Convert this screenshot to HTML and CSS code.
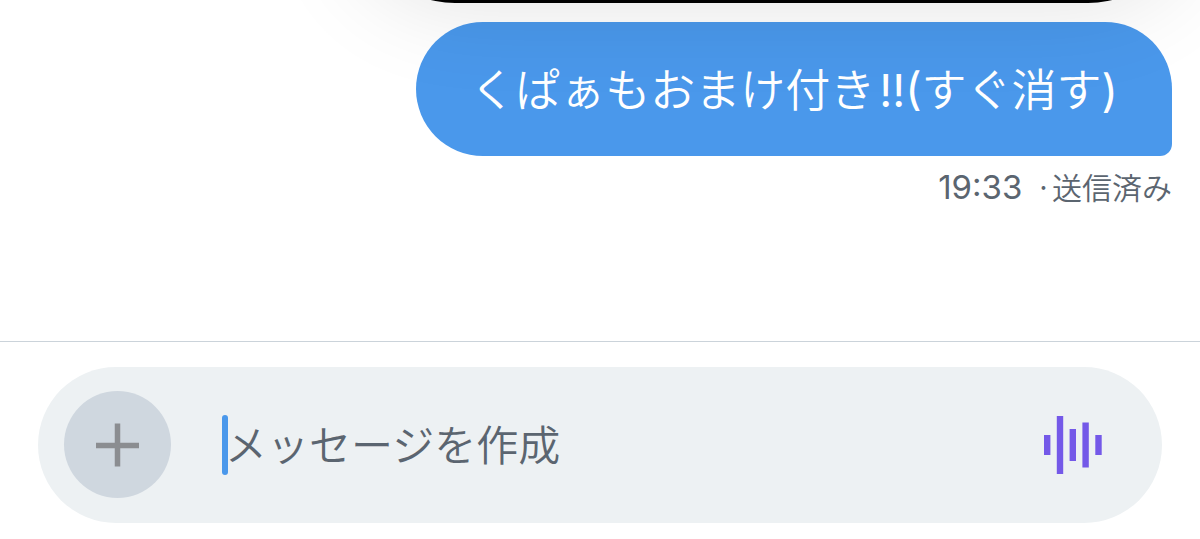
FILE: index.html
```html
<!DOCTYPE html>
<html lang="ja">
	<head>
		<meta charset="UTF-8">
		<meta name="viewport" content="width=device-width, initial-scale=1">
		<title>メッセージ</title>
		<link rel="stylesheet" href="styles.css">
	</head>
	<body>
		<main class="thread">
			<div class="message">
				<p class="bubble">くぱぁもおまけ付き<span class="mark">!!(</span>すぐ消す<span class="latin">)</span></p>
				<p class="meta"><time class="time">19:33</time><span class="dot">·</span><span>送信済み</span></p>
			</div>
		</main>
		<footer class="footer">
			<form class="composer">
				<button class="add" type="button" aria-label="追加">
					<svg width="44" height="44" viewBox="0 0 44 44">
						<path d="M21.5 0.5V43.5M0 22.5H43" stroke="#8b8d91" stroke-width="5.5" fill="none"/>
					</svg>
				</button>
				<span class="caret"></span>
				<input class="field" type="text" placeholder="メッセージを作成" aria-label="メッセージを作成">
				<button class="voice" type="button" aria-label="音声メッセージ">
					<svg width="58" height="58" viewBox="0 0 58 58" fill="#7459e8">
						<rect x="0" y="19" width="6.4" height="20"/>
						<rect x="12.8" y="0" width="6.4" height="58"/>
						<rect x="25.6" y="13" width="6.4" height="32"/>
						<rect x="38.4" y="6.5" width="6.4" height="45"/>
						<rect x="51.3" y="19" width="6.4" height="20"/>
					</svg>
				</button>
			</form>
		</footer>
		<div class="overlay"></div>
	</body>
</html>
```
FILE: styles.css
```css
*{
	box-sizing: border-box;
	padding: 0;
	margin: 0;
}
body{
	display: flex;
	flex-direction: column;
	min-height: 100vh;
	overflow-x: hidden;
	background: #fff;
	color: #5b6570;
	font-family: "Noto Sans CJK JP", sans-serif;
	font-weight: 350;
}
.thread {
	flex: 1;
	padding: 22px 28px;
}
.message {
	display: flex;
	flex-direction: column;
	align-items: flex-end;
}
.bubble {
	padding: 32px 54px 31px;
	border-radius: 67px 67px 12px 67px;
	background: #4a98eb;
	color: #fff;
	font-size: 45px;
	line-height: 68px;
}
.mark,
.latin,
.time {
	font-family: Inter, "Noto Sans CJK JP", sans-serif;
	font-weight: 400;
}
.mark {
	margin-left: 4px;
}
.meta {
	display: flex;
	align-items: baseline;
	margin-top: 8px;
	font-size: 30px;
	line-height: 44px;
}
.time {
	font-size: 33px;
}
.dot {
	margin: 0 0 0 13px;
}
.footer {
	padding: 25px 38px 16px;
	border-top: 1px solid #cbd3da;
}
/* 入力欄 */
.composer {
	display: flex;
	align-items: center;
	padding: 24px 60px 25px 26px;
	border-radius: 78px;
	background: #edf1f3;
}
.add,
.voice {
	display: flex;
	flex: none;
	align-items: center;
	justify-content: center;
	border: 0;
	background: none;
	cursor: pointer;
}
.add {
	width: 107px;
	height: 107px;
	border-radius: 50%;
	background: #cfd7df;
}
.caret {
	flex: none;
	width: 6px;
	height: 60px;
	margin: 0 -3px 0 51px;
	border-radius: 3px;
	background: #4a98eb;
}
.field {
	flex: 1;
	min-width: 0;
	padding-bottom: 4px;
	border: 0;
	outline: 0;
	background: none;
	color: #5b6570;
	font: inherit;
	font-size: 42px;
	line-height: 60px;
}
.field::placeholder {
	color: #5b6570;
	opacity: 1;
}
/* 上に重なるカードの下端 */
.overlay {
	position: absolute;
	top: -297px;
	left: 355px;
	right: 12px;
	height: 300px;
	border-radius: 100px;
	background: #000;
	box-shadow: 0 0 100px rgba(0, 0, 0, 0.12);
	pointer-events: none;
}
```
